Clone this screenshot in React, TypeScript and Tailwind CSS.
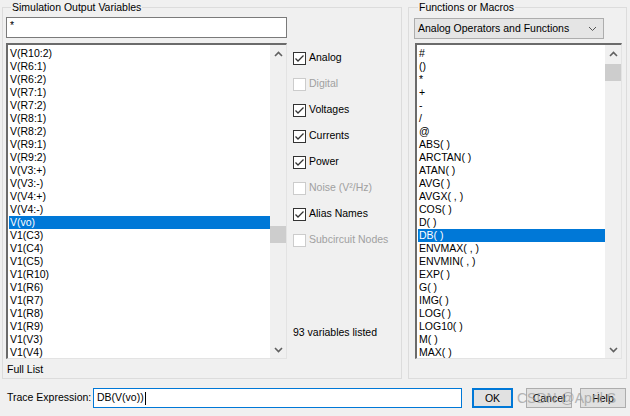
const outputs = [
  "V(R10:2)", "V(R6:1)", "V(R6:2)", "V(R7:1)", "V(R7:2)", "V(R8:1)", "V(R8:2)", "V(R9:1)",
  "V(R9:2)", "V(V3:+)", "V(V3:-)", "V(V4:+)", "V(V4:-)", "V(vo)", "V1(C3)", "V1(C4)",
  "V1(C5)", "V1(R10)", "V1(R6)", "V1(R7)", "V1(R8)", "V1(R9)", "V1(V3)", "V1(V4)",
];

const functions = [
  "#", "()", "*", "+", "-", "/", "@", "ABS( )", "ARCTAN( )", "ATAN( )", "AVG( )", "AVGX( , )",
  "COS( )", "D( )", "DB( )", "ENVMAX( , )", "ENVMIN( , )", "EXP( )", "G( )", "IMG( )", "LOG( )",
  "LOG10( )", "M( )", "MAX( )",
];

const options = [
  { label: "Analog", checked: true, disabled: false },
  { label: "Digital", checked: false, disabled: true },
  { label: "Voltages", checked: true, disabled: false },
  { label: "Currents", checked: true, disabled: false },
  { label: "Power", checked: true, disabled: false },
  { label: "Noise (V²/Hz)", checked: false, disabled: true },
  { label: "Alias Names", checked: true, disabled: false },
  { label: "Subcircuit Nodes", checked: false, disabled: true },
];

function Chevron({ up }: { up?: boolean }) {
  return (
    <svg width="9" height="6" viewBox="0 0 9 6">
      <polyline
        points={up ? "1,5 4.5,1.5 8,5" : "1,1 4.5,4.5 8,1"}
        fill="none"
        stroke="#606060"
        strokeWidth="1.6"
      />
    </svg>
  );
}

function ListBox({
  items,
  selected,
  width,
  thumbTop,
}: {
  items: string[];
  selected: string;
  width: string;
  thumbTop: string;
}) {
  return (
    <div className={`flex h-[316px] ${width} border-l-2 border-t-2 border-b border-r border-l-[#6b6b6b] border-t-[#6b6b6b] border-b-[#e3e3e3] border-r-[#e3e3e3] bg-white`}>
      <div className="flex-1 overflow-hidden pt-[2px]">
        {items.map((item) => (
          <div
            key={item}
            className={`ml-[1px] h-[13px] whitespace-pre pl-[1px] leading-[13px] ${
              item === selected ? "bg-[#0078d7] text-white" : "text-black"
            }`}
          >
            {item}
          </div>
        ))}
      </div>
      <div className="flex w-[16px] flex-col bg-[#f0f0f0]">
        <div className="flex h-[17px] items-center justify-center">
          <Chevron up />
        </div>
        <div className={`h-[17px] w-full bg-[#cdcdcd] ${thumbTop}`} />
        <div className="flex-1" />
        <div className="flex h-[17px] items-center justify-center">
          <Chevron />
        </div>
      </div>
    </div>
  );
}

function CheckBox({ checked, disabled }: { checked: boolean; disabled: boolean }) {
  return (
    <div
      className={`flex h-[13px] w-[13px] shrink-0 items-center justify-center border bg-white ${
        disabled ? "border-[#cccccc]" : "border-[#333333]"
      }`}
    >
      {checked && (
        <svg width="11" height="11" viewBox="0 0 11 11">
          <polyline points="1.5,5.5 4,8 9.5,2.5" fill="none" stroke="#333333" strokeWidth="1.3" />
        </svg>
      )}
    </div>
  );
}

export default function App() {
  return (
    <div className="relative h-[416px] w-[630px] overflow-hidden bg-[#f0f0f0] font-['Liberation_Sans',Arial,sans-serif] text-[10.5px] text-black">
      <div className="flex pt-[7px]">
        {/* left group */}
        <div className="relative ml-[2px] h-[372px] w-[400px] border border-[#dcdcdc] pl-[3px] pt-[9px]">
          <div className="absolute left-[8px] top-[-8px] bg-[#f0f0f0] px-[1px] leading-[14px]">
            Simulation Output Variables
          </div>
          <div className="h-[21px] w-[281px] border border-[#7a7a7a] bg-white px-[3px] pt-[1px] leading-[13px]">
            *
          </div>
          <div className="mt-[5px] flex">
            <ListBox items={outputs} selected="V(vo)" width="w-[281px]" thumbTop="mt-[164px]" />
            <div className="ml-[6px] flex flex-col pt-[2px]">
              {options.map((o) => (
                <div key={o.label} className="flex h-[26px] items-center gap-[3px]">
                  <CheckBox checked={o.checked} disabled={o.disabled} />
                  <span className={o.disabled ? "text-[#a0a0a0]" : "text-black"}>{o.label}</span>
                </div>
              ))}
              <div className="mt-[73px] leading-[13px]">93 variables listed</div>
            </div>
          </div>
          <div className="mt-[4px] pl-[1px] leading-[13px]">Full List</div>
        </div>

        {/* right group */}
        <div className="relative ml-[6px] h-[372px] w-[219px] border border-[#dcdcdc] pl-[5px] pt-[10px]">
          <div className="absolute left-[9px] top-[-8px] bg-[#f0f0f0] px-[1px] leading-[14px]">
            Functions or Macros
          </div>
          <div className="flex h-[21px] w-[190px] items-center justify-between border border-[#adadad] bg-[#e5e5e5] pl-[3px] pr-[6px]">
            <span>Analog Operators and Functions</span>
            <svg width="9" height="6" viewBox="0 0 9 6">
              <polyline points="1,1 4.5,4.5 8,1" fill="none" stroke="#555555" strokeWidth="1" />
            </svg>
          </div>
          <div className="ml-[1px] mt-[4px]">
            <ListBox items={functions} selected="DB( )" width="w-[207px]" thumbTop="mt-[2px]" />
          </div>
        </div>
      </div>

      {/* bottom row */}
      <div className="mt-[9px] flex h-[20px] items-center">
        <span className="ml-[7px] w-[86px] whitespace-nowrap">Trace Expression:</span>
        <div className="flex h-[20px] w-[369px] items-center border border-[#0078d7] bg-white pl-[3px]">
          <span>DB(V(vo))</span>
          <span className="ml-[1px] h-[13px] w-[1px] bg-black" />
        </div>
        <button className="ml-[10px] h-[20px] w-[41px] border-2 border-[#0078d7] bg-[#e1e1e1] leading-[16px]">
          OK
        </button>
        <button className="ml-[13px] h-[20px] w-[46px] border border-[#adadad] bg-[#e1e1e1] leading-[18px]">
          Cancel
        </button>
        <button className="ml-[8px] h-[20px] w-[46px] border border-[#adadad] bg-[#e1e1e1] leading-[18px]">
          Help
        </button>
      </div>

      <div className="pointer-events-none absolute left-[517px] top-[390px] text-[14px] leading-[16px] text-[#9a9a9a] opacity-70">
        CSDN @April S
      </div>
    </div>
  );
}
